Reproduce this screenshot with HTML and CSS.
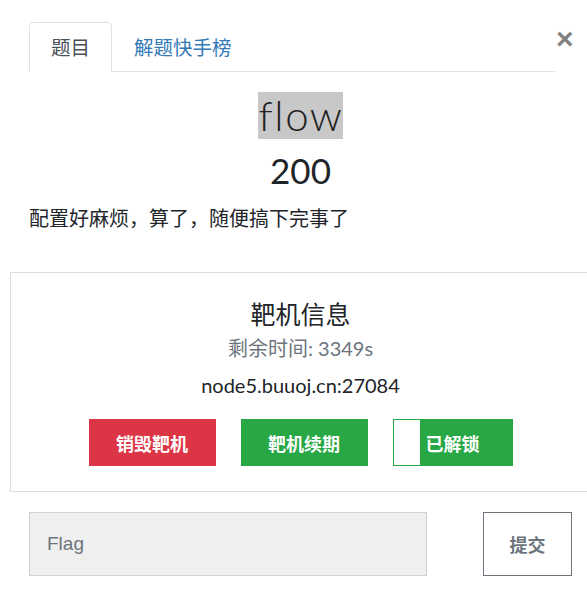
FILE: index.html
```html
<!DOCTYPE html>
<html lang="zh">
<head>
<meta charset="utf-8">
<title>flow</title>
<link rel="stylesheet" href="styles.css">
</head>
<body>
<div class="page">
  <div class="header">
    <ul class="tabs">
      <li class="tab active">题目</li>
      <li class="tab">解题快手榜</li>
    </ul>
    <span class="close">×</span>
  </div>
  <div class="title-row"><span class="title">flow</span></div>
  <div class="score">200</div>
  <p class="desc">配置好麻烦，算了，随便搞下完事了</p>
  <div class="box">
    <div class="box-title">靶机信息</div>
    <div class="remain">剩余时间: 3349s</div>
    <div class="host">node5.buuoj.cn:27084</div>
    <div class="btns">
      <button class="btn red">销毁靶机</button>
      <button class="btn green">靶机续期</button>
      <button class="btn toggle">已解锁</button>
    </div>
  </div>
  <div class="submit-row">
    <input class="flag" type="text" placeholder="Flag">
    <button class="submit">提交</button>
  </div>
</div>
</body>
</html>
```
FILE: styles.css
```css
html, body {
  margin: 0;
  padding: 0;
  overflow: hidden;
  background: #fff;
}
body {
  font-family: Lato, "Noto Sans CJK SC", sans-serif;
  color: #212529;
}
.page {
  margin-left: 10px;
  width: 581px;
}
.header {
  display: flex;
  align-items: flex-start;
  padding: 22px 0 0 19px;
}
.tabs {
  flex: 1;
  display: flex;
  margin: 0;
  padding: 0;
  list-style: none;
  border-bottom: 1px solid #dee2e6;
  max-width: 526px;
}
.tab {
  height: 48px;
  line-height: 48px;
  padding: 0 21px;
  font-size: 19.5px;
  color: #337ab7;
  border: 1px solid transparent;
  border-top-left-radius: 5px;
  border-top-right-radius: 5px;
  margin-bottom: -1px;
  font-family: "Noto Sans CJK SC", sans-serif;
}
.tab.active {
  color: #495057;
  border-color: #dee2e6 #dee2e6 #fff;
  background: #fff;
}
.close {
  width: 16px;
  margin-left: 1px;
  margin-top: 2px;
  font-family: "Liberation Sans", sans-serif;
  font-size: 30px;
  font-weight: 700;
  line-height: 30px;
  color: #808080;
}
.title-row {
  text-align: center;
  margin-top: 20px;
  height: 47px;
}
.title {
  display: inline-block;
  background: #c8c8c8;
  font-family: Lato, sans-serif;
  font-weight: 300;
  font-size: 42px;
  line-height: 47px;
  letter-spacing: 1.5px;
  padding: 0 0 0 1px;
  color: #222;
}
.score {
  text-align: center;
  margin-top: 11px;
  font-size: 35px;
  line-height: 40px;
}
.desc {
  margin: 13px 0 0 0;
  padding-left: 19px;
  font-family: "Noto Sans CJK SC", sans-serif;
  font-size: 20px;
  line-height: 30px;
}
.box {
  margin-top: 39px;
  border: 1px solid #ddd;
  padding: 23px 0 25px;
  text-align: center;
}
.box-title {
  font-family: "Noto Sans CJK SC", sans-serif;
  font-size: 25px;
  line-height: 34px;
}
.remain {
  margin-top: 4px;
  font-size: 20px;
  line-height: 28px;
  color: #6c757d;
}
.host {
  margin-top: 9px;
  font-size: 20px;
  line-height: 28px;
}
.btns {
  margin-top: 20px;
  display: flex;
  justify-content: center;
  gap: 25px;
}
.btn {
  width: 127px;
  height: 47px;
  border: 1px solid transparent;
  color: #fff;
  font-family: "Noto Sans CJK SC", sans-serif;
  font-weight: 700;
  font-size: 18px;
  padding: 0;
}
.red { background: #dc3545; border-color: #dc3545; }
.green { background: #28a745; border-color: #28a745; }
.toggle {
  width: 120px;
  border-color: #28a745;
  background: linear-gradient(to right, #fff 26px, #28a745 26px);
}
.submit-row {
  margin-top: 20px;
  padding-left: 19px;
  display: flex;
  gap: 56px;
}
.flag {
  box-sizing: border-box;
  width: 398px;
  height: 64px;
  background: #efefef;
  border: 1px solid #ced4da;
  padding: 0 17px;
  font-family: "Liberation Sans", sans-serif;
  font-size: 19px;
  color: #495057;
  outline: none;
}
.flag::placeholder { color: #6c757d; }
.submit {
  box-sizing: border-box;
  width: 89px;
  height: 64px;
  background: #fff;
  border: 1px solid #6c757d;
  color: #6c757d;
  font-family: "Noto Sans CJK SC", sans-serif;
  font-weight: 700;
  font-size: 18px;
  padding: 0;
}
```
